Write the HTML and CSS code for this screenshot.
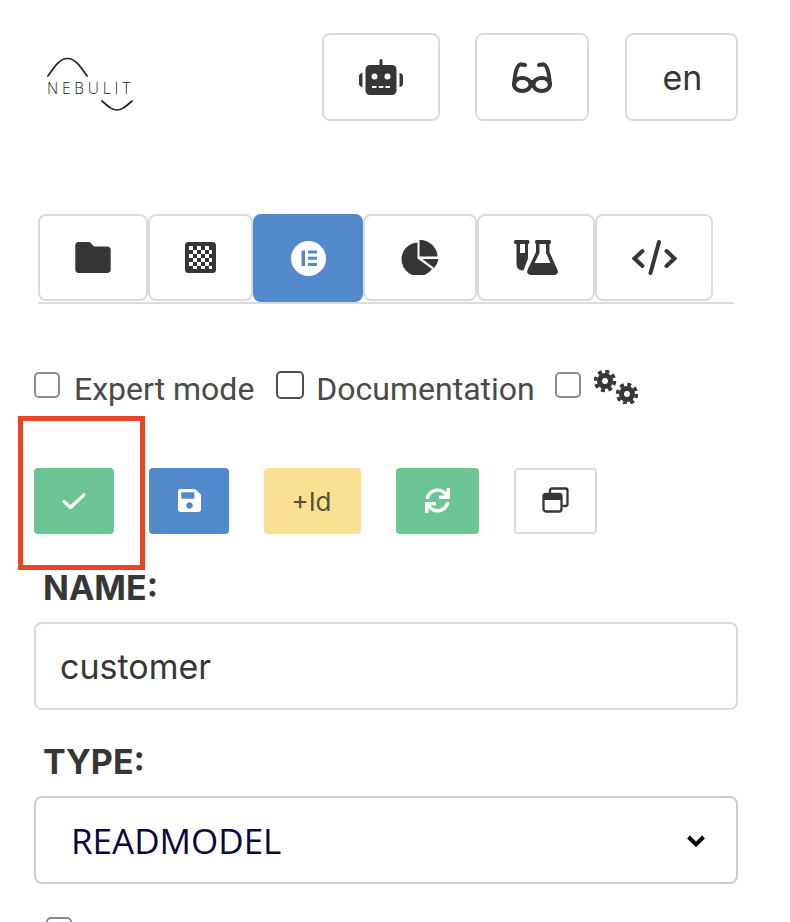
FILE: index.html
```html
<!DOCTYPE html>
<html lang="en">
<head>
<meta charset="utf-8">
<title>Nebulit</title>
<link rel="stylesheet" href="styles.css">
</head>
<body>
<main class="page">
  <header class="topbar">
    <div class="logo">
      <svg class="logo-arc logo-arc-top" viewBox="0 0 42 20"><path d="M1 19C8 9 13 1.500 20.500 1.500S33 9 40 19"/></svg>
      <span class="logo-text">NEBULIT</span>
      <svg class="logo-arc logo-arc-bottom" viewBox="0 0 32 12"><path d="M1 1C8 7 11 10 16 10S24 7 31 1"/></svg>
    </div>
    <nav class="top-actions">
      <button class="top-btn top-btn-robot"><svg class="icon-robot" viewBox="0 0 44 36"><rect x="6.500" y="6" width="31" height="30" rx="4.500"/><rect x="20.500" y="0" width="3" height="8" rx="1.500"/><path d="M3.500 14v14C1.500 28 0 26.500 0 24.500v-7C0 15.500 1.500 14 3.500 14zM40.500 14v14c2 0 3.500-1.500 3.500-3.500v-7c0-2-1.500-3.500-3.500-3.500z"/><circle class="cut" cx="15.500" cy="17.500" r="3"/><circle class="cut" cx="28.500" cy="17.500" r="3"/><rect class="cut" x="13" y="27" width="4.500" height="2"/><rect class="cut" x="19.800" y="27" width="4.500" height="2"/><rect class="cut" x="26.500" y="27" width="4.500" height="2"/></svg></button>
      <button class="top-btn top-btn-glasses"><svg class="icon-glasses" viewBox="0 0 40 31"><path class="line" d="M2.200 22C2.800 12 4.500 3.500 8.500 2.300L13 3M37.800 22C37.200 12 35.500 3.500 31.500 2.300L27 3"/><ellipse class="line" cx="10.300" cy="22.500" rx="8.300" ry="6.500"/><ellipse class="line" cx="29.700" cy="22.500" rx="8.300" ry="6.500"/><path class="line" d="M18 20.500C19.500 19.800 20.500 19.800 22 20.500"/></svg></button>
      <button class="top-btn top-btn-lang">en</button>
    </nav>
  </header>

  <ul class="tabs">
    <li class="tab tab-folder"><svg class="icon-folder" viewBox="0 0 512 448"><path d="M464 64H272L208 0H48C21.490 0 0 21.490 0 48v352c0 26.510 21.490 48 48 48h416c26.510 0 48-21.490 48-48V112c0-26.510-21.490-48-48-48z"/></svg></li>
    <li class="tab tab-board"><svg class="icon-board" viewBox="0 0 31 31"><defs><pattern id="checks" width="8" height="8" patternUnits="userSpaceOnUse" patternTransform="translate(4 4)"><rect width="4" height="4" fill="#fff"/><rect x="4" y="4" width="4" height="4" fill="#fff"/></pattern></defs><rect width="31" height="31" rx="3.500"/><rect x="4" y="4" width="23" height="23" fill="url(#checks)"/></svg></li>
    <li class="tab tab-active"><svg class="icon-elementor" viewBox="0 0 35 35"><circle cx="17.500" cy="17.500" r="17.500" fill="#fff"/><rect class="blue" x="10.500" y="9.500" width="3.500" height="15.500"/><rect class="blue" x="17" y="9.500" width="9" height="3"/><rect class="blue" x="17" y="15.700" width="9" height="3"/><rect class="blue" x="17" y="22" width="9" height="3"/></svg></li>
    <li class="tab tab-pie"><svg class="icon-pie" viewBox="0 0 38 35"><path d="M16.500 2.500A16.800 16.800 0 1 0 31 29L16.500 18.500z"/><path d="M18.500 0A17.500 17.500 0 0 1 36.500 16.500H18.500z"/><path d="M21.500 19h16A17 17 0 0 1 33 28z"/></svg></li>
    <li class="tab tab-flask"><svg class="icon-flask" viewBox="0 0 44 35"><path fill-rule="evenodd" d="M1.500 0H14C15 0 15.500.8 15.500 2S15 4 14 4V18.500L9.500 30.500C5.500 30.500 2.500 28.500 2.500 24V4H1.500C.6 4 0 3.200 0 2S.6 0 1.500 0zM6 4V13H11V4z"/><path fill-rule="evenodd" d="M22.500 0H35.500C36.500 0 37 .8 37 2S36.500 4 35.500 4V12L43.500 30C44.800 32.500 43 35 40 35H17C14 35 12.200 32.500 13.500 30L22 12V4C21.500 4 21 3.200 21 2S21.500 0 22.500 0zM25.500 4V13L20.500 23H36.500L32 13V4z"/></svg></li>
    <li class="tab tab-code"><svg class="icon-code" viewBox="0 0 45 35"><path class="line" d="M10.500 11L2.500 18.500 10.500 26M34.500 11L42.500 18.500 34.500 26M27 2L18.500 33"/></svg></li>
  </ul>

  <div class="options">
    <label class="option option-expert"><input class="check" type="checkbox"><span>Expert mode</span></label>
    <label class="option option-docs"><input class="check check-dark" type="checkbox"><span>Documentation</span></label>
    <label class="option option-settings"><input class="check" type="checkbox"><svg class="icon-cogs" viewBox="0 0 44 34"><g class="gear"><circle cx="11" cy="11" r="8"/><circle class="teeth" cx="11" cy="11" r="9.500"/><circle class="hole" cx="11" cy="11" r="3"/></g><g class="gear"><circle cx="33" cy="24" r="8"/><circle class="teeth" cx="33" cy="24" r="9.500"/><circle class="hole" cx="33" cy="24" r="3"/></g></svg></label>
  </div>

  <div class="toolbar">
    <span class="highlight"></span>
    <button class="act act-green act-check"><svg class="icon-check" viewBox="0 0 24 16"><path d="M2 8.500L8.500 14.500 22 1.800"/></svg></button>
    <button class="act act-blue"><svg class="icon-save" viewBox="0 32 448 448"><path d="M433.941 129.941l-83.882-83.882A48 48 0 0 0 316.118 32H48C21.490 32 0 53.490 0 80v352c0 26.510 21.490 48 48 48h352c26.510 0 48-21.490 48-48V163.882a48 48 0 0 0-14.059-33.941zM224 416c-35.346 0-64-28.654-64-64 0-35.346 28.654-64 64-64s64 28.654 64 64c0 35.346-28.654 64-64 64zm96-304.520V212c0 6.627-5.373 12-12 12H76c-6.627 0-12-5.373-12-12V108c0-6.627 5.373-12 12-12h228.520c3.183 0 6.235 1.264 8.485 3.515l3.480 3.480A11.996 11.996 0 0 1 320 111.480z"/></svg></button>
    <button class="act act-yellow">+Id</button>
    <button class="act act-green act-sync"><svg class="icon-sync" viewBox="0 0 512 512"><path d="M440.650 12.570l4 82.770A247.160 247.160 0 0 0 255.830 8C134.730 8 33.910 94.920 12.290 209.820A12 12 0 0 0 24.090 224h49.050a12 12 0 0 0 11.670-9.260 175.910 175.910 0 0 1 317-56.940l-101.460-4.860a12 12 0 0 0-12.570 12v47.410a12 12 0 0 0 12 12H500a12 12 0 0 0 12-12V12a12 12 0 0 0-12-12h-47.370a12 12 0 0 0-11.980 12.570zM255.830 432a175.610 175.610 0 0 1-146-77.800l101.800 4.870a12 12 0 0 0 12.570-12v-47.400a12 12 0 0 0-12-12H12a12 12 0 0 0-12 12V500a12 12 0 0 0 12 12h47.350a12 12 0 0 0 12-12.600l-4.150-82.570A247.170 247.170 0 0 0 255.830 504c121.110 0 221.930-86.920 243.550-201.820a12 12 0 0 0-11.800-14.180h-49.050a12 12 0 0 0-11.670 9.260A175.860 175.860 0 0 1 255.830 432z"/></svg></button>
    <button class="act act-outline"><svg class="icon-window" viewBox="0 0 27 26"><path class="thin" d="M8 5V3.500C8 2.400 8.900 1.500 10 1.500H23.500C24.600 1.500 25.500 2.400 25.500 3.500V17C25.500 18.100 24.600 19 23.500 19H21.500"/><rect class="thin" x="1.500" y="7" width="18" height="17.500" rx="2.500"/><path d="M1.500 9.500C1.500 8 2.500 7 4 7H17C18.500 7 19.500 8 19.500 9.500V13H1.500z"/></svg></button>
  </div>

  <form class="fields">
    <label class="field-label" for="name">NAME:</label>
    <input class="text-input" id="name" type="text" value="customer">
    <label class="field-label field-label-type" for="type">TYPE:</label>
    <div class="select-wrap">
      <select class="select" id="type"><option>READMODEL</option></select>
      <svg class="icon-chevron" viewBox="0 0 20 14"><path d="M2.500 3L10 10.500 17.500 3"/></svg>
    </div>
    <label class="list-option"><input class="check check-list" type="checkbox"><span>List</span></label>
  </form>
</main>
</body>
</html>
```
FILE: styles.css
```css
* { box-sizing: border-box; }
html, body { margin: 0; height: 922px; overflow: hidden; background: #fff; }
body { font-family: Roboto, "Liberation Sans", sans-serif; color: #363636; }
.page { position: relative; height: 922px; overflow: hidden; padding-top: 33px; }
button { font: inherit; padding: 0; background: #fff; cursor: pointer; display: flex; align-items: center; justify-content: center; }
svg { display: block; fill: #363636; }
.line, .thin { fill: none; stroke: #363636; stroke-linecap: round; }

.topbar { display: flex; justify-content: space-between; align-items: flex-start; height: 88px; padding: 0 52px 0 47px; }
.logo { width: 86px; margin-top: 24px; position: relative; height: 54px; }
.logo-arc { position: absolute; }
.logo-arc path { fill: none; stroke: #222; stroke-width: 1.700; stroke-linecap: round; }
.logo-arc-top { left: 0; top: 0; width: 42px; height: 20px; }
.logo-arc-bottom { left: 54px; top: 43px; width: 32px; height: 12px; }
.logo-text { position: absolute; left: 0; top: 21px; font-family: "Open Sans", sans-serif; font-weight: 300; font-size: 15.500px; line-height: 20px; letter-spacing: 3.800px; color: #222; white-space: nowrap; }
.top-actions { display: flex; gap: 35px; }
.top-btn { height: 88px; border: 2px solid #dbdbdb; border-radius: 8px; font-size: 34px; color: #363636; font-family: Inter, sans-serif; }
.top-btn-robot { width: 118px; }
.top-btn-glasses { width: 114px; }
.top-btn-lang { width: 113px; margin-left: 1px; padding-left: 2px; }
.icon-robot { width: 44px; height: 36px; }
.icon-robot .cut { fill: #fff; }
.icon-glasses { width: 40px; height: 31px; }
.icon-glasses .line { stroke-width: 4; stroke-linejoin: round; }

.tabs { list-style: none; margin: 93px 0 0 38px; padding: 0; width: 696px; height: 90px; display: flex; align-items: flex-start; border-bottom: 2px solid #dbdbdb; }
.tab { height: 87px; border: 2px solid #dbdbdb; border-radius: 8px; display: flex; align-items: center; justify-content: center; flex: none; }
.tab-folder { width: 110px; }
.tab-board { width: 105px; }
.tab-active { width: 110px; height: 88px; background: #5289ca; border-color: #5289ca; }
.tab-pie { width: 114px; }
.tab-flask { width: 118px; }
.tab-code { width: 118px; }
.icon-folder { width: 36px; height: 31px; }
.icon-board { width: 31px; height: 31px; }
.icon-elementor { width: 35px; height: 35px; }
.icon-elementor .blue { fill: #5289ca; }
.icon-pie { width: 38px; height: 35px; }
.icon-flask { width: 44px; height: 35px; }
.icon-code { width: 45px; height: 35px; }
.icon-code .line { stroke-width: 4; }

.options { display: flex; align-items: flex-start; height: 34px; margin: 67px 0 0 34px; font-size: 32px; line-height: 34px; color: #4a4a4a; }
.option { display: flex; align-items: flex-start; }
.option-expert { margin-top: 1px; }
.option-expert span { margin-left: 14px; }
.option-docs { margin-left: 22px; }
.option-docs span { margin-left: 12px; margin-top: 1px; }
.option-settings { margin-left: 20px; margin-top: 1px; }
.check { appearance: none; -webkit-appearance: none; display: block; margin: 0; width: 26px; height: 26px; border: 2px solid #8a8a8a; border-radius: 5px; background: #fff; flex: none; }
.check-dark { width: 28px; height: 28px; border-color: #4e4e4e; }
.icon-cogs { width: 44px; height: 34px; margin-left: 13px; margin-top: -2px; }
.gear .teeth { fill: none; stroke: #363636; stroke-width: 3.500; stroke-dasharray: 4 3.460; }
.gear .hole { fill: #fff; }

.toolbar { position: relative; display: flex; gap: 35px; height: 66px; margin: 63px 0 0 34px; }
.highlight { position: absolute; left: -16px; top: -52px; width: 127px; height: 154px; border: 5px solid #ea4426; }
.act { width: 80px; height: 66px; border: 0; border-radius: 4px; color: #fff; }
.act-green { background: #6dc594; }
.act-blue { background: #5289ca; }
.act-yellow { width: 97px; background: #fbe093; color: #5a5030; font-size: 26px; font-family: Inter, sans-serif; padding-right: 2px; }
.act-sync { width: 83px; }
.act-outline { width: 83px; background: #fff; border: 2px solid #dbdbdb; }
.act svg { fill: #fff; }
.icon-check { width: 24px; height: 16px; }
.act .icon-check { fill: none; }
.icon-check path { fill: none; stroke: #fff; stroke-width: 3.200; stroke-linecap: round; stroke-linejoin: round; }
.icon-save { width: 23px; height: 23px; margin-top: -2px; }
.icon-sync { width: 25px; height: 25px; margin-top: -2px; }
.act-outline svg { fill: #363636; width: 27px; height: 26px; margin-top: -2px; }
.icon-window .thin { stroke-width: 2.300; }

.fields { display: block; margin: 0 0 0 34px; width: 704px; }
.field-label { display: block; padding-left: 9px; margin-top: 35px; height: 38px; font-family: Inter, sans-serif; font-weight: 700; font-size: 34px; line-height: 38px; color: #363636; }
.text-input { display: block; width: 100%; height: 88px; margin-top: 15px; padding: 0 24px; border: 2px solid #dbdbdb; border-radius: 8px; font-family: Inter, sans-serif; font-size: 34px; color: #363636; background: #fff; outline: 0; }
.field-label-type { margin-top: 33px; }
.select-wrap { position: relative; height: 88px; margin-top: 15px; }
.select { appearance: none; -webkit-appearance: none; display: block; width: 100%; height: 88px; padding: 0 35px; border: 2px solid #cdcbdb; border-radius: 8px; background: #fff; font-family: "Open Sans", sans-serif; font-size: 35px; color: #0a0440; outline: 0; }
.icon-chevron { position: absolute; right: 32px; top: 38px; width: 20px; height: 14px; pointer-events: none; }
.icon-chevron path { fill: none; stroke: #000; stroke-width: 4; }
.list-option { display: flex; align-items: flex-start; margin: 33px 0 0 12px; font-size: 32px; line-height: 34px; color: #4a4a4a; }
.list-option span { margin-left: 14px; }
```
